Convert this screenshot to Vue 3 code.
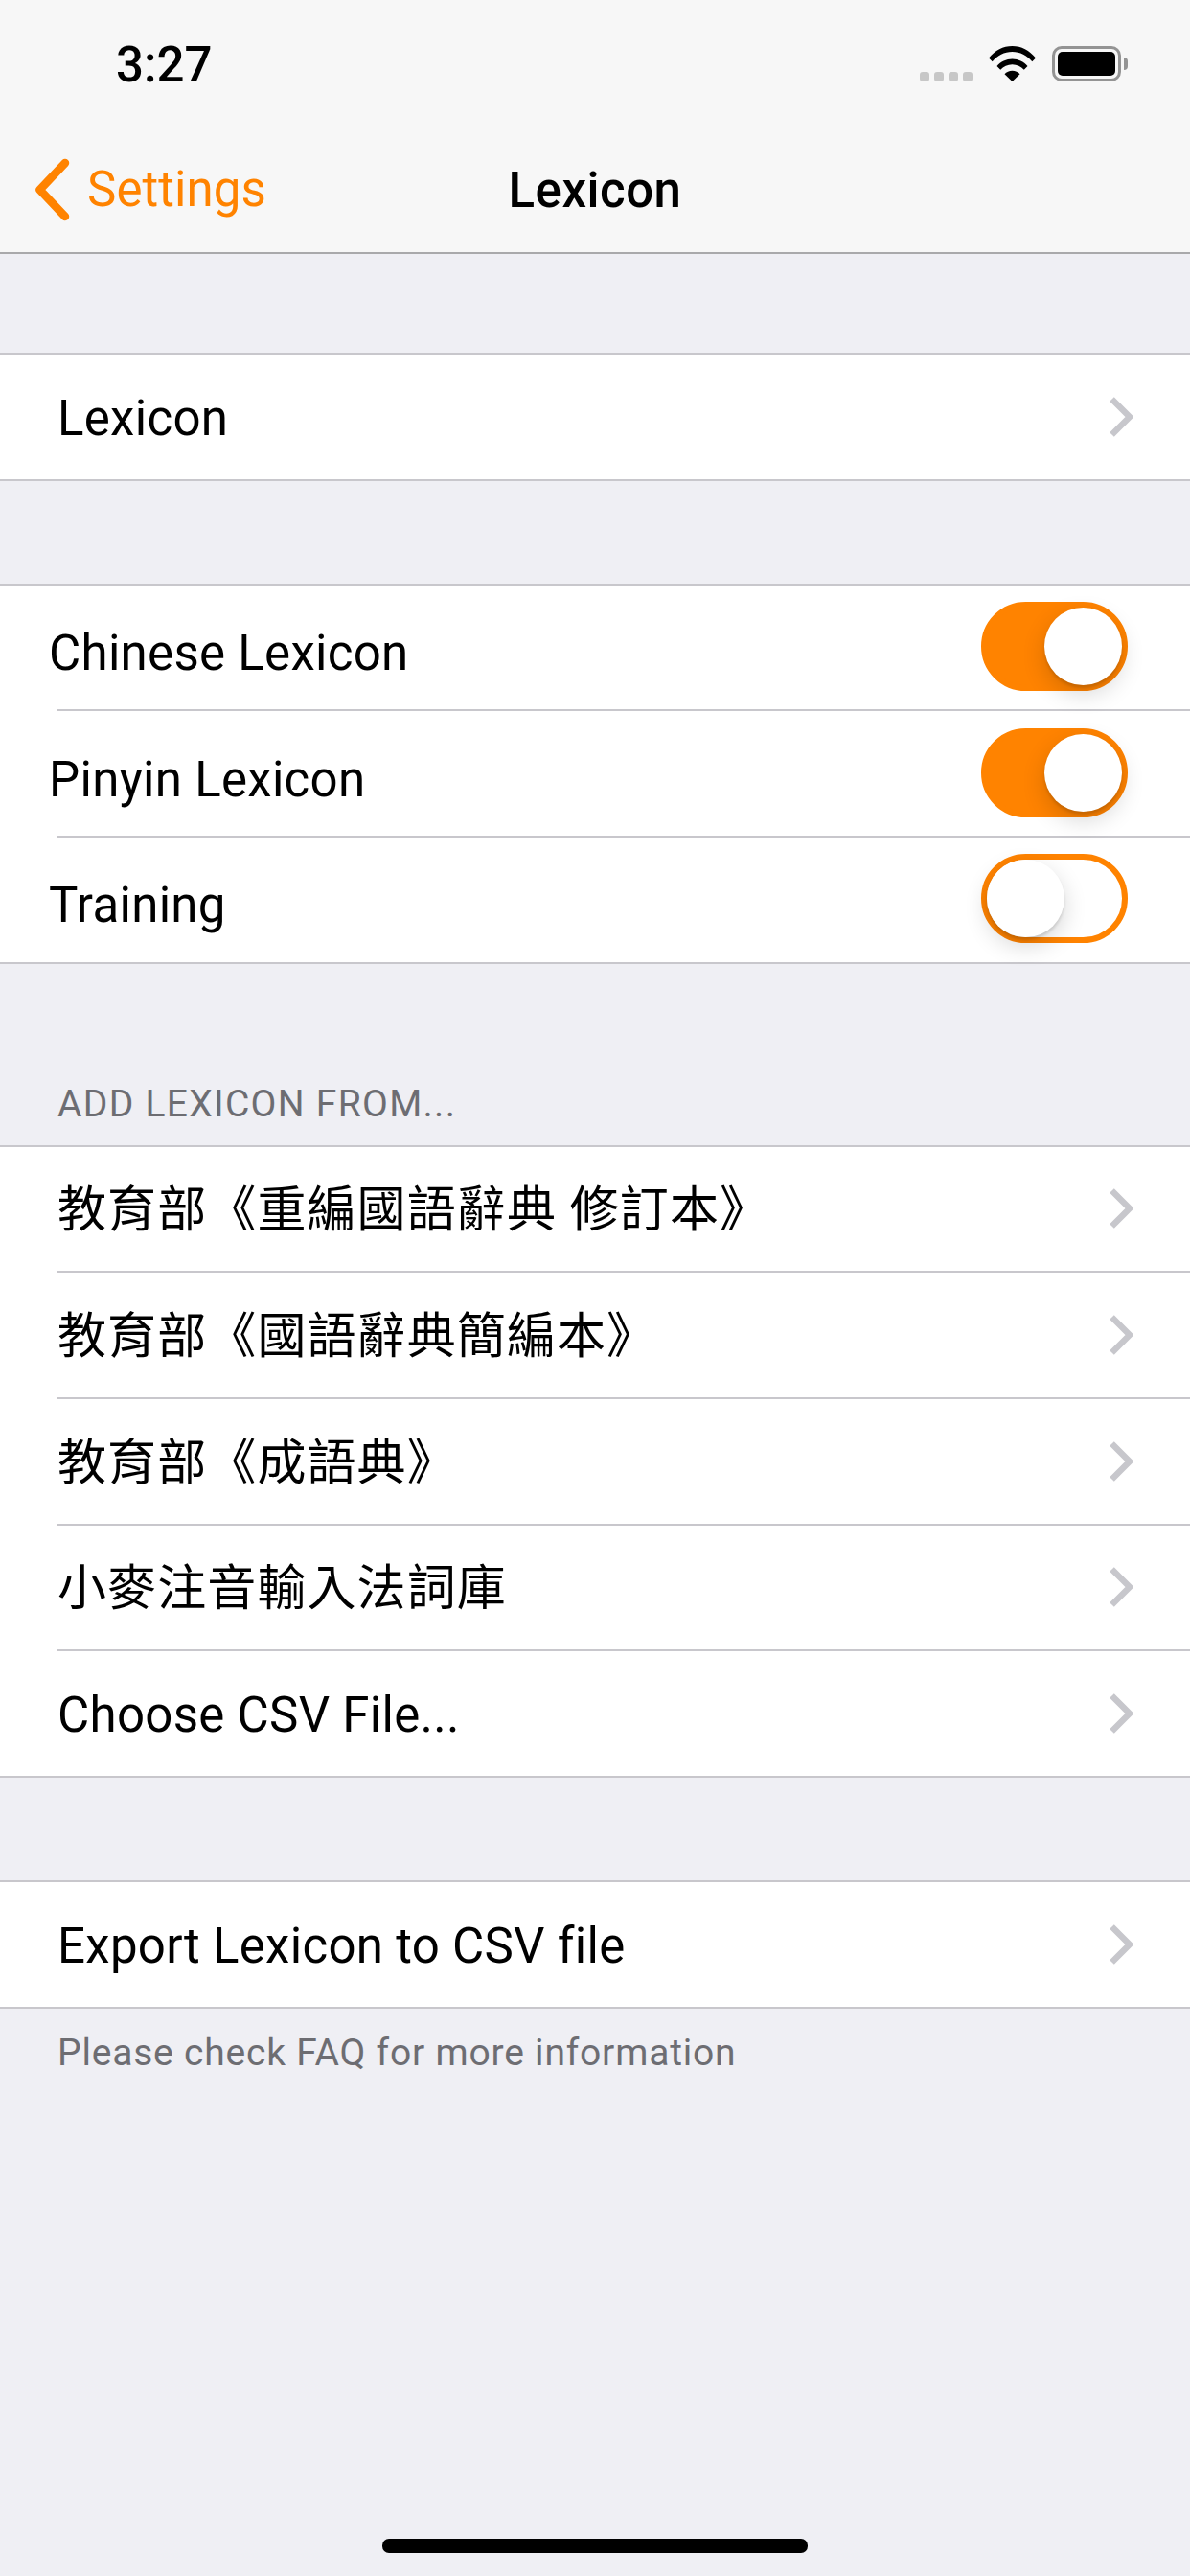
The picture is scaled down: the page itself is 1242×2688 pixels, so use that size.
<template>
  <div class="page">
    <header class="head">
      <div class="status">
        <span class="time">3:27</span>
        <div class="status-icons">
          <div class="dots"><i></i><i></i><i></i><i></i></div>
          <svg class="wifi" width="49" height="37" viewBox="0 0 49 37">
            <path d="M0 12.5C6.5 4.5 15 0 24.5 0S42.500 4.500 49 12.500L45.300 16.200C40 9.800 32.800 6 24.500 6S9 9.800 3.700 16.200Z" fill="#000" />
            <path d="M8.500 21C12.500 16.300 18.200 13.500 24.500 13.500S36.500 16.300 40.500 21L36.800 24.800C33.700 21.300 29.300 19.200 24.500 19.200S15.300 21.300 12.200 24.800Z" fill="#000" />
            <path d="M16.500 29.200C18.500 27.100 21.300 25.800 24.500 25.800S30.500 27.100 32.500 29.200L24.500 37Z" fill="#000" />
          </svg>
          <div class="battery"><div class="cell"></div></div>
          <div class="nub"></div>
        </div>
      </div>
      <nav class="nav">
        <div class="back">
          <svg width="38" height="66" viewBox="0 0 38 66">
            <path d="M32 5L5.500 33L32 61" fill="none" stroke="#ff8300" stroke-width="8.500" stroke-linecap="round" stroke-linejoin="round" />
          </svg>
          <span>Settings</span>
        </div>
        <h1 class="title">Lexicon</h1>
      </nav>
    </header>

    <section class="group first">
      <div class="row"><span class="label">Lexicon</span><Chevron /></div>
    </section>

    <section class="group second">
      <div v-for="t in toggles" :key="t.name" class="row toggle-row">
        <span class="label">{{ t.name }}</span>
        <div :class="['switch', { on: t.on }]"><div class="knob"></div></div>
      </div>
    </section>

    <p class="section-title">ADD LEXICON FROM...</p>
    <section class="group">
      <div v-for="s in sources" :key="s.text" class="row"><span :class="['label', { cjk: s.cjk }]">{{ s.text }}</span><Chevron /></div>
    </section>

    <section class="group last">
      <div class="row"><span class="label">Export Lexicon to CSV file</span><Chevron /></div>
    </section>
    <p class="footer">Please check FAQ for more information</p>

    <div class="home"></div>
  </div>
</template>

<script setup>
import { h } from 'vue'

const Chevron = () =>
  h('svg', { class: 'chev', width: 24, height: 42, viewBox: '0 0 24 42' }, [
    h('path', { d: 'M2.500 2.500L21 21L2.500 39.500', fill: 'none', stroke: '#c7c7cc', 'stroke-width': 6.5 }),
  ])

const toggles = [
  { name: 'Chinese Lexicon', on: true },
  { name: 'Pinyin Lexicon', on: true },
  { name: 'Training', on: false },
]

const sources = [
  { text: '教育部《重編國語辭典 修訂本》', cjk: true },
  { text: '教育部《國語辭典簡編本》', cjk: true },
  { text: '教育部《成語典》', cjk: true },
  { text: '小麥注音輸入法詞庫', cjk: true },
  { text: 'Choose CSV File...', cjk: false },
]
</script>

<style>
html, body { margin: 0; background: #efeff4; }
</style>

<style scoped>
.page {
  width: 1242px;
  height: 2688px;
  display: flex;
  flex-direction: column;
  background: #efeff4;
  font-family: Roboto, "Noto Sans CJK TC", sans-serif;
  color: #000;
  overflow: hidden;
}
.head { height: 263px; background: #f7f7f7; border-bottom: 2px solid #a9a9ab; flex: none; }
.status { height: 132px; position: relative; display: flex; justify-content: space-between; padding: 0 65px 0 121px; }
.time { font-size: 51px; font-weight: 500; line-height: 48px; margin-top: 44px; }
.status-icons { display: flex; align-items: flex-start; padding-top: 48px; }
.dots { display: flex; gap: 5px; margin-top: 27px; margin-right: 17px; }
.dots i { width: 10px; height: 10px; border-radius: 3px; background: #c7c7c7; display: block; }
.wifi { margin-right: 17px; }
.battery { width: 72px; height: 37px; box-sizing: border-box; border: 3px solid #949494; border-radius: 10px; padding: 3px; }
.cell { height: 100%; background: #000; border-radius: 5px; }
.nub { width: 4px; height: 13px; background: #949494; border-radius: 0 4px 4px 0; margin: 12px 0 0 3px; }
.nav { height: 131px; display: flex; align-items: center; position: relative; padding-left: 36px; box-sizing: border-box; }
.back { display: flex; align-items: center; gap: 17px; color: #ff8300; font-size: 51px; letter-spacing: .1px; }
.back svg { display: block; }
.title {
  position: absolute;
  left: 0;
  right: 0;
  top: 0;
  margin: 0;
  line-height: 134px;
  text-align: center;
  font-size: 51px;
  font-weight: 500;
  letter-spacing: .5px;
}
.group { background: #fff; border-top: 2px solid #c8c7cc; border-bottom: 2px solid #c8c7cc; flex: none; }
.first { margin-top: 103px; }
.second { margin-top: 107px; }
.last { margin-top: 107px; }
.row {
  height: 129.67px;
  margin-left: 60px;
  padding-right: 60px;
  display: flex;
  align-items: center;
  justify-content: space-between;
}
.row + .row { border-top: 2px solid #c8c7cc; }
.label { font-size: 51px; line-height: 60px; white-space: nowrap; letter-spacing: .3px; padding-top: 4px; }
.label.cjk { letter-spacing: 1.1px; }
.chev { display: block; }
.toggle-row { padding-right: 65px; }
.toggle-row .label { margin-left: -9px; padding-top: 13px; }
.switch {
  width: 153px;
  height: 93px;
  box-sizing: border-box;
  border: 6px solid #ff8300;
  border-radius: 47px;
  background: #fff;
  display: flex;
  justify-content: flex-start;
  margin-top: -2px;
}
.switch.on { background: #ff8300; justify-content: flex-end; }
.knob {
  width: 81px;
  height: 81px;
  border-radius: 50%;
  background: #fff;
  box-shadow: 0 9px 24px rgba(0, 0, 0, .16), 0 3px 3px rgba(0, 0, 0, .12);
}
.section-title {
  margin: 0;
  height: 189px;
  padding: 124px 0 0 60px;
  line-height: 45px;
  font-size: 39px;
  letter-spacing: 1.3px;
  color: #6d6d72;
  flex: none;
  box-sizing: border-box;
}
.footer {
  margin: 23px 0 0;
  padding-left: 60px;
  line-height: 46px;
  font-size: 39px;
  letter-spacing: .8px;
  color: #6d6d72;
}
.home { width: 444px; height: 15px; border-radius: 7px; background: #000; margin: auto auto 24px; }
</style>
